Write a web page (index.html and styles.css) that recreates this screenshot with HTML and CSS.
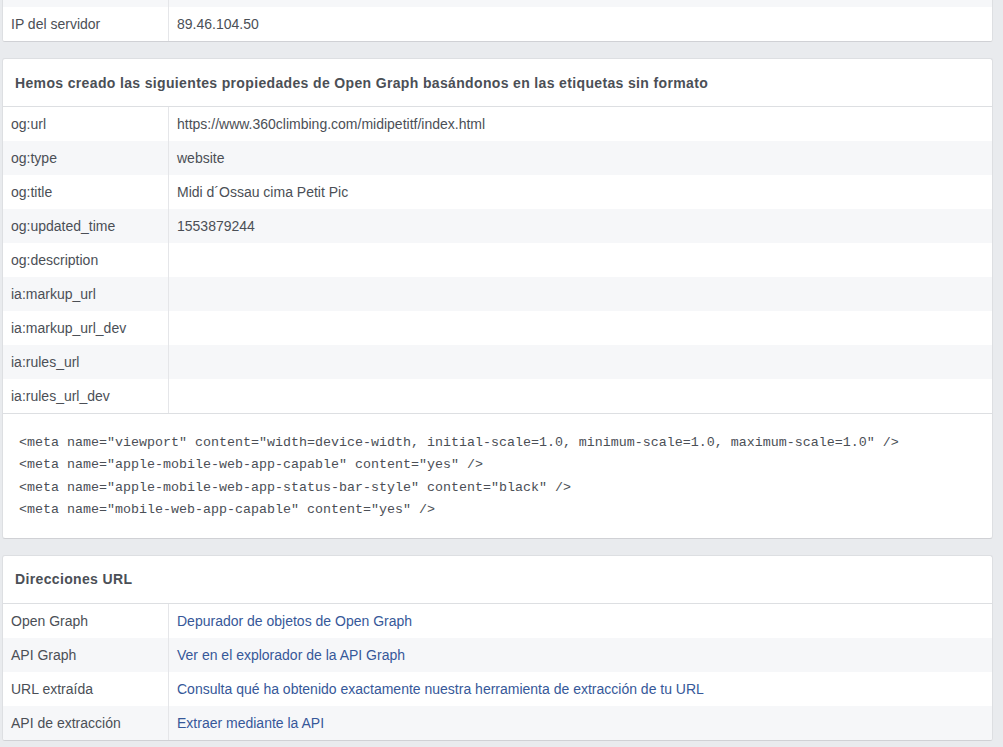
FILE: index.html
```html
<!DOCTYPE html>
<html lang="es">
<head>
<meta charset="utf-8">
<link rel="stylesheet" href="styles.css">
</head>
<body>
<div class="page">
  <section class="card card-top">
    <div class="row alt stub"><div class="label"></div><div class="value"></div></div>
    <div class="row"><div class="label">IP del servidor</div><div class="value">89.46.104.50</div></div>
  </section>

  <section class="card">
    <header class="card-head">Hemos creado las siguientes propiedades de Open Graph basándonos en las etiquetas sin formato</header>
    <div class="row"><div class="label">og:url</div><div class="value">https://www.360climbing.com/midipetitf/index.html</div></div>
    <div class="row alt"><div class="label">og:type</div><div class="value">website</div></div>
    <div class="row"><div class="label">og:title</div><div class="value">Midi d´Ossau cima Petit Pic</div></div>
    <div class="row alt"><div class="label">og:updated_time</div><div class="value">1553879244</div></div>
    <div class="row"><div class="label">og:description</div><div class="value"></div></div>
    <div class="row alt"><div class="label">ia:markup_url</div><div class="value"></div></div>
    <div class="row"><div class="label">ia:markup_url_dev</div><div class="value"></div></div>
    <div class="row alt"><div class="label">ia:rules_url</div><div class="value"></div></div>
    <div class="row"><div class="label">ia:rules_url_dev</div><div class="value"></div></div>
    <pre class="code">&lt;meta name="viewport" content="width=device-width, initial-scale=1.0, minimum-scale=1.0, maximum-scale=1.0" /&gt;
&lt;meta name="apple-mobile-web-app-capable" content="yes" /&gt;
&lt;meta name="apple-mobile-web-app-status-bar-style" content="black" /&gt;
&lt;meta name="mobile-web-app-capable" content="yes" /&gt;</pre>
  </section>

  <section class="card">
    <header class="card-head">Direcciones URL</header>
    <div class="row"><div class="label">Open Graph</div><div class="value"><a href="#">Depurador de objetos de Open Graph</a></div></div>
    <div class="row alt"><div class="label">API Graph</div><div class="value"><a href="#">Ver en el explorador de la API Graph</a></div></div>
    <div class="row"><div class="label">URL extraída</div><div class="value"><a href="#">Consulta qué ha obtenido exactamente nuestra herramienta de extracción de tu URL</a></div></div>
    <div class="row alt"><div class="label">API de extracción</div><div class="value"><a href="#">Extraer mediante la API</a></div></div>
  </section>
</div>
</body>
</html>
```

FILE: styles.css
```css
html, body {
  margin: 0;
  padding: 0;
  background: #e9ebee;
}
body {
  font-family: "Liberation Sans", Arial, Helvetica, sans-serif;
  font-size: 14px;
  color: #1d2129;
}
.page {
  width: 991px;
  margin-left: 2px;
  display: flex;
  flex-direction: column;
  gap: 16px;
}
.card {
  background: #fff;
  border: 1px solid #dddfe2;
  border-bottom-color: #d0d1d5;
  border-radius: 3px;
  overflow: hidden;
}
.card-top {
  border-top: none;
  border-top-left-radius: 0;
  border-top-right-radius: 0;
}
.card-head {
  height: 47px;
  display: flex;
  align-items: center;
  padding: 0 12px;
  font-weight: bold;
  font-size: 14px;
  letter-spacing: 0.35px;
  color: #4b4f56;
  border-bottom: 1px solid #dddfe2;
}
.row {
  display: flex;
  height: 34px;
  background: #fff;
}
.row.alt {
  background: #f6f7f9;
}
.row.stub {
  height: 7px;
}
.label {
  width: 157px;
  flex: none;
  padding: 0 0 0 8px;
  border-right: 1px solid #e5e6e9;
  display: flex;
  align-items: center;
  color: #4b4f56;
}
.value {
  flex: 1;
  padding: 0 8px;
  display: flex;
  align-items: center;
  color: #4b4f56;
}
.value a {
  color: #365899;
  text-decoration: none;
}
.code {
  margin: 0;
  border-top: 1px solid #dddfe2;
  padding: 18px 16px 16px;
  font-family: "Liberation Mono", "Courier New", monospace;
  font-size: 13.33px;
  line-height: 22.4px;
  color: #4b4f56;
  white-space: pre;
}
```
